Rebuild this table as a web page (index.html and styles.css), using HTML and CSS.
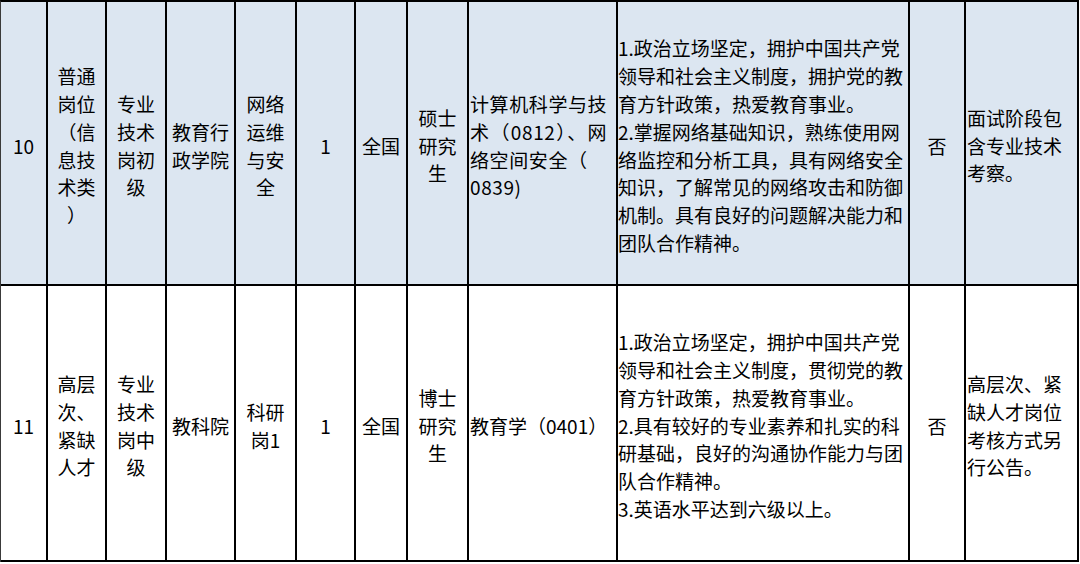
FILE: index.html
```html
<!DOCTYPE html>
<html lang="zh-CN">
<head>
<meta charset="utf-8">
<title>岗位表</title>
<link rel="stylesheet" href="styles.css">
</head>
<body>
<div class="sheet">
  <div class="row alt">
    <div class="cell c">10</div>
    <div class="cell c">普通<br>岗位<br>（信<br>息技<br>术类<br>）</div>
    <div class="cell c">专业<br>技术<br>岗初<br>级</div>
    <div class="cell c">教育行<br>政学院</div>
    <div class="cell c">网络<br>运维<br>与安<br>全</div>
    <div class="cell c">1</div>
    <div class="cell c">全国</div>
    <div class="cell c">硕士<br>研究<br>生</div>
    <div class="cell l">
      <div class="stack wide">
        <span class="ln">计算机科学与技</span>
        <span class="ln just">术（0812）、网</span>
        <span class="ln">络空间安全（</span>
        <span class="ln">0839)</span>
      </div>
    </div>
    <div class="cell l req">1.政治立场坚定，拥护中国共产党<br>领导和社会主义制度，拥护党的教<br>育方针政策，热爱教育事业。<br>2.掌握网络基础知识，熟练使用网<br>络监控和分析工具，具有网络安全<br>知识，了解常见的网络攻击和防御<br>机制。具有良好的问题解决能力和<br>团队合作精神。</div>
    <div class="cell c">否</div>
    <div class="cell l">面试阶段包<br>含专业技术<br>考察。</div>
  </div>
  <div class="row">
    <div class="cell c">11</div>
    <div class="cell c">高层<br>次、<br>紧缺<br>人才</div>
    <div class="cell c">专业<br>技术<br>岗中<br>级</div>
    <div class="cell c">教科院</div>
    <div class="cell c">科研<br>岗1</div>
    <div class="cell c">1</div>
    <div class="cell c">全国</div>
    <div class="cell c">博士<br>研究<br>生</div>
    <div class="cell l">教育学（0401）</div>
    <div class="cell l req">1.政治立场坚定，拥护中国共产党<br>领导和社会主义制度，贯彻党的教<br>育方针政策，热爱教育事业。<br>2.具有较好的专业素养和扎实的科<br>研基础，良好的沟通协作能力与团<br>队合作精神。<br>3.英语水平达到六级以上。</div>
    <div class="cell c">否</div>
    <div class="cell l">高层次、紧<br>缺人才岗位<br>考核方式另<br>行公告。</div>
  </div>
</div>
</body>
</html>
```

FILE: styles.css
```css
html, body {
  margin: 0;
  padding: 0;
  background: #ffffff;
}

body {
  font-family: "Noto Sans CJK SC", "Noto Sans", sans-serif;
  font-size: 19px;
  line-height: 27.8px;
  color: #000000;
}

.sheet {
  display: grid;
  grid-template-columns: 47px 59px 60px 69px 61px 59px 52px 61px 149px 292px 56px 113px;
  grid-template-rows: 284px 276px;
  width: 1078px;
  border-left: 1px solid #3a3a3a;
  border-top: 2px solid #000000;
}

.row {
  display: contents;
}

.cell {
  box-sizing: border-box;
  display: flex;
  align-items: center;
  border-right: 2px solid #000000;
  border-bottom: 2px solid #000000;
  white-space: nowrap;
  padding-top: 5px;
}

.row.alt .cell {
  background: #dce6f1;
}

.cell.c {
  justify-content: center;
  text-align: center;
}

.cell.l {
  justify-content: flex-start;
  text-align: left;
  padding-left: 1px;
}

.cell.req {
  padding-left: 0;
}

.stack .ln {
  display: block;
}

.stack.wide {
  letter-spacing: 0.6px;
}

.stack .just {
  text-align: justify;
  text-align-last: justify;
  white-space: normal;
}
```
